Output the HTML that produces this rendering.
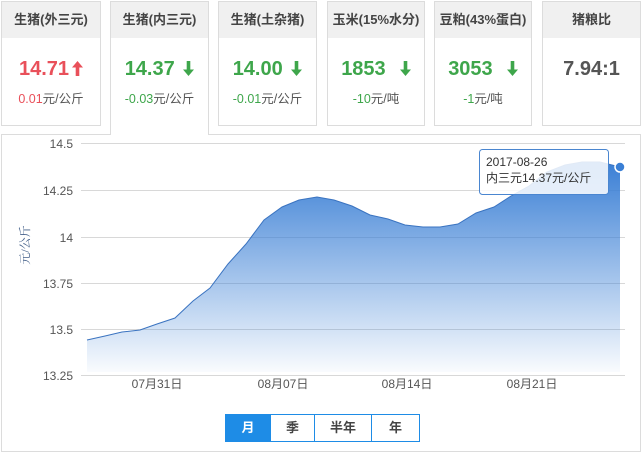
<!DOCTYPE html>
<html><head><meta charset="utf-8"><style>
*{margin:0;padding:0;box-sizing:border-box}
body{width:643px;height:455px;background:#fff;position:relative;overflow:hidden;font-family:"Liberation Sans","Noto Sans CJK SC",sans-serif}
.card{position:absolute;top:1px;height:125px;border:1px solid #dcdcdc;background:#fff;text-align:center}
.card .h{height:36px;background:#f0f0f0;line-height:36px;font-size:13px;color:#444;font-weight:bold}
.card .v{margin-top:18px;font-size:20px;font-weight:bold;line-height:26px}
.card .s{margin-top:6px;font-size:12.5px;color:#555}
.red{color:#e9505a}.grn{color:#3ea64b}
.ar{display:inline-block;vertical-align:-1px;margin-left:3px}
.panel{position:absolute;left:1px;top:134px;width:640px;height:318px;border:1px solid #dcdcdc}
.btns{position:absolute;top:414px;left:225px;height:28px;display:flex;border:1px solid #1e8ce6}
.btns div{height:26px;line-height:26px;text-align:center;font-size:13px;font-weight:bold;color:#444;border-left:1px solid #1e8ce6}
</style></head><body>
<div class="panel"></div>
<div class="card" style="left:1px;width:100px"><div class="h">生猪(外三元)</div><div class="v red">14.71<svg class="ar" width="11" height="15" viewBox="0 0 11 15"><path d="M5.5 0 L11 6.5 L7.3 6.5 L7.3 15 L3.7 15 L3.7 6.5 L0 6.5 Z" fill="#e9505a"/></svg></div><div class="s"><span class="red">0.01</span>元/公斤</div></div>
<div class="card" style="left:110px;width:99px;height:134px;border-bottom:none"><div class="h">生猪(内三元)</div><div class="v grn">14.37 <svg class="ar" width="11" height="15" viewBox="0 0 11 15"><path d="M5.5 15 L11 8.5 L7.3 8.5 L7.3 0 L3.7 0 L3.7 8.5 L0 8.5 Z" fill="#3ea64b"/></svg></div><div class="s"><span class="grn">-0.03</span>元/公斤</div></div>
<div class="card" style="left:218px;width:99px"><div class="h">生猪(土杂猪)</div><div class="v grn">14.00 <svg class="ar" width="11" height="15" viewBox="0 0 11 15"><path d="M5.5 15 L11 8.5 L7.3 8.5 L7.3 0 L3.7 0 L3.7 8.5 L0 8.5 Z" fill="#3ea64b"/></svg></div><div class="s"><span class="grn">-0.01</span>元/公斤</div></div>
<div class="card" style="left:327px;width:98px"><div class="h">玉米(15%水分)</div><div class="v grn">1853 &nbsp;<svg class="ar" width="11" height="15" viewBox="0 0 11 15"><path d="M5.5 15 L11 8.5 L7.3 8.5 L7.3 0 L3.7 0 L3.7 8.5 L0 8.5 Z" fill="#3ea64b"/></svg></div><div class="s"><span class="grn">-10</span>元/吨</div></div>
<div class="card" style="left:434px;width:98px"><div class="h">豆粕(43%蛋白)</div><div class="v grn">3053 &nbsp;<svg class="ar" width="11" height="15" viewBox="0 0 11 15"><path d="M5.5 15 L11 8.5 L7.3 8.5 L7.3 0 L3.7 0 L3.7 8.5 L0 8.5 Z" fill="#3ea64b"/></svg></div><div class="s"><span class="grn">-1</span>元/吨</div></div>
<div class="card" style="left:542px;width:99px"><div class="h">猪粮比</div><div class="v" style="color:#555">7.94:1</div></div>
<svg style="position:absolute;left:0;top:0" width="643" height="455">
<defs><linearGradient id="g" x1="0" y1="0" x2="0" y2="1"><stop offset="0" stop-color="#3a7fd5"/><stop offset="1" stop-color="#3a7fd5" stop-opacity="0.03"/></linearGradient></defs>
<g stroke="#d8d8d8" stroke-width="1">
<line x1="81" y1="143.5" x2="625" y2="143.5"/><line x1="81" y1="190.5" x2="625" y2="190.5"/><line x1="81" y1="237.5" x2="625" y2="237.5"/><line x1="81" y1="283.5" x2="625" y2="283.5"/><line x1="81" y1="329.5" x2="625" y2="329.5"/><line x1="81" y1="375.5" x2="625" y2="375.5"/></g>
<g font-size="12" fill="#555" text-anchor="end" font-family="Liberation Sans,sans-serif">
<text x="73" y="148">14.5</text><text x="73" y="195">14.25</text><text x="73" y="242">14</text><text x="73" y="288">13.75</text><text x="73" y="334">13.5</text><text x="73" y="380">13.25</text></g>
<g font-size="12" fill="#555" text-anchor="middle">
<text x="157" y="388">07月31日</text><text x="283" y="388">08月07日</text><text x="407" y="388">08月14日</text><text x="532" y="388">08月21日</text></g>
<text transform="translate(29,245) rotate(-90)" font-size="12" fill="#44608a" text-anchor="middle" font-family="Liberation Serif,Noto Serif CJK SC,serif">元/公斤</text>
<path d="M87,340 L105,336 L122,332 L140,330 L157,324 L175,318 L193,301 L210,288 L228,264 L246,244 L264,220 L282,207 L299,200 L317,197 L334,200 L352,206 L370,215 L388,219 L405,225 L423,227 L440,227 L458,224 L476,213 L494,207 L511,196 L529,186 L547,172 L565,165 L582,162 L600,162 L620,167 L620,372 L87,372 Z" fill="url(#g)"/>
<path d="M87,340 L105,336 L122,332 L140,330 L157,324 L175,318 L193,301 L210,288 L228,264 L246,244 L264,220 L282,207 L299,200 L317,197 L334,200 L352,206 L370,215 L388,219 L405,225 L423,227 L440,227 L458,224 L476,213 L494,207 L511,196 L529,186 L547,172 L565,165 L582,162 L600,162 L620,167" fill="none" stroke="#3a73c0" stroke-width="1"/>
<circle cx="620" cy="167" r="5" fill="#3a7fd5" stroke="#fff" stroke-width="1.5"/>
<rect x="479.5" y="149.5" width="129" height="45" rx="3" fill="#fff" fill-opacity="0.85" stroke="#4a86d0"/>
<text x="486" y="166" font-size="12" fill="#333">2017-08-26</text>
<text x="486" y="182" font-size="12" fill="#333">内三元14.37元/公斤</text>
</svg>
<div class="btns"><div style="width:44px;border-left:none;background:#1e8ce6;color:#fff">月</div><div style="width:44px">季</div><div style="width:57px">半年</div><div style="width:48px">年</div></div>
</body></html>
